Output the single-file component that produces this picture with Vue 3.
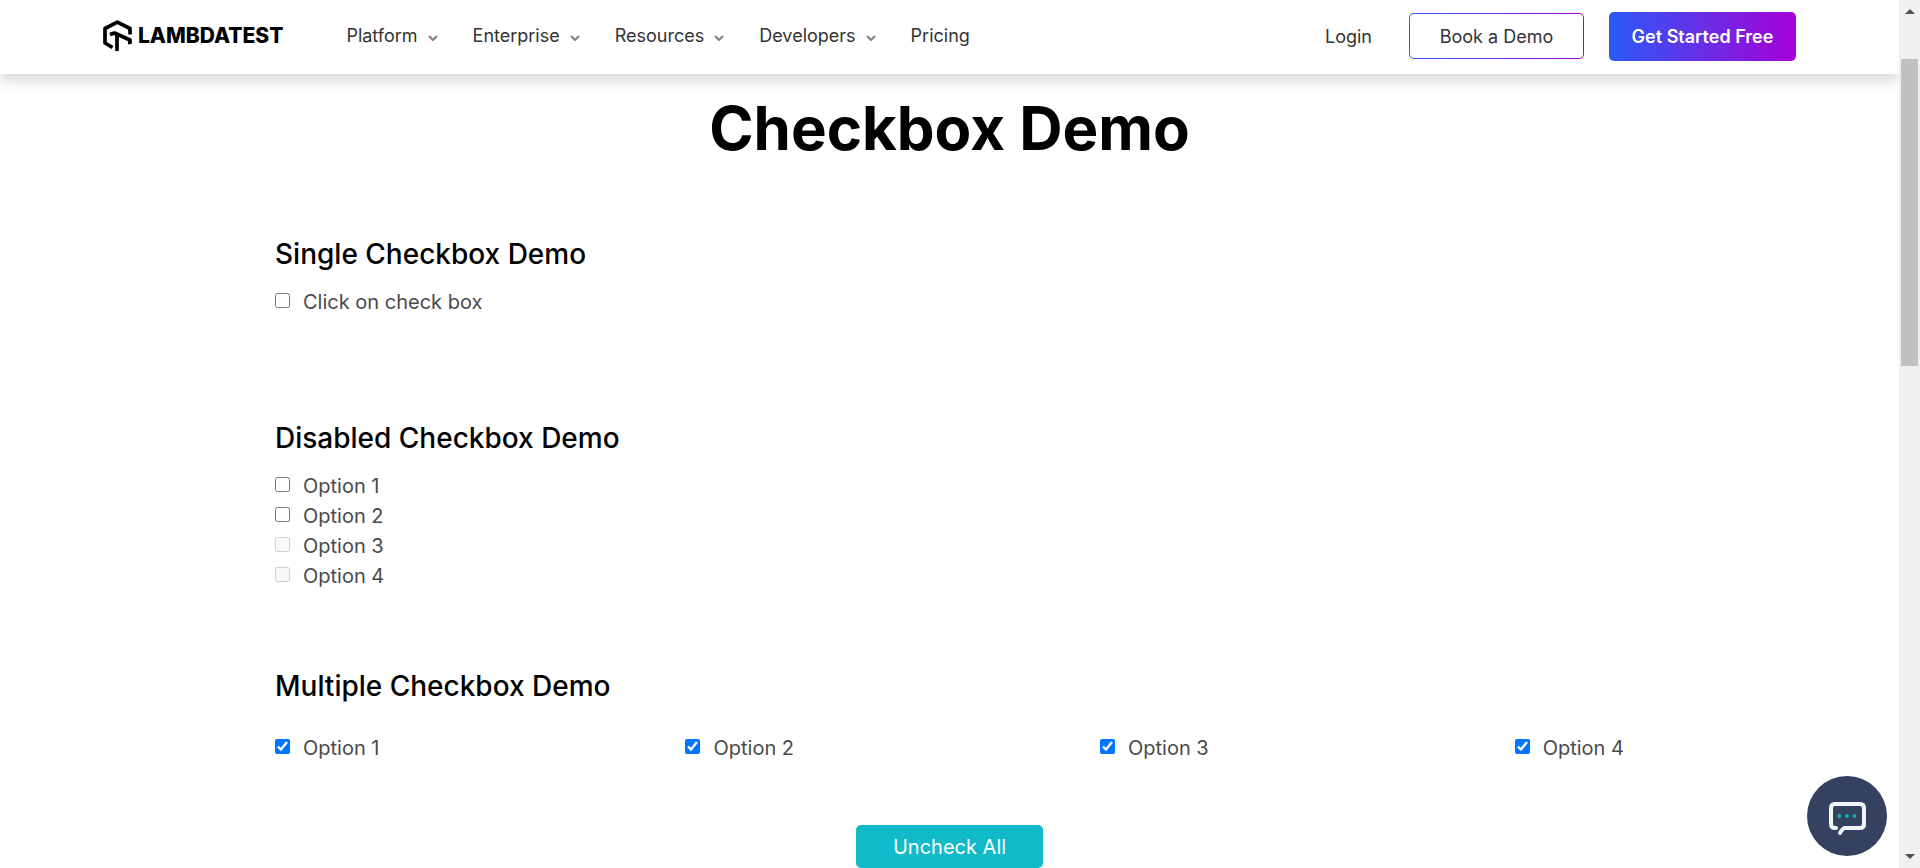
<script setup>
import { ref, computed } from 'vue'

const menus = ['Platform', 'Enterprise', 'Resources', 'Developers']

const single = ref(false)
const limited = ref([
  { label: 'Option 1', checked: false, disabled: false },
  { label: 'Option 2', checked: false, disabled: false },
  { label: 'Option 3', checked: false, disabled: true },
  { label: 'Option 4', checked: false, disabled: true },
])
const multiple = ref([
  { label: 'Option 1', checked: true },
  { label: 'Option 2', checked: true },
  { label: 'Option 3', checked: true },
  { label: 'Option 4', checked: true },
])

const allChecked = computed(() => multiple.value.every((o) => o.checked))
function toggleAll() {
  const next = !allChecked.value
  multiple.value.forEach((o) => { o.checked = next })
}
</script>

<template>
  <div class="window">
    <div class="page">
      <header class="header">
        <a class="logo" href="#">
          <svg class="logo-mark" viewBox="0 0 29 32" aria-hidden="true">
            <path d="M9.500 27.500 L2 23 V8.500 L14.300 2.200 L27 8.500 V14.500" />
            <path d="M7 14.500 L11.500 13 L27 20 V22.500 L25 22.500" />
            <path d="M14 15 V31" />
          </svg>
          <span class="logo-text">LAMBDATEST</span>
        </a>
        <nav class="nav">
          <button v-for="menu in menus" :key="menu" type="button" class="nav-item">
            {{ menu }}
            <svg class="chevron" viewBox="0 0 10 7" aria-hidden="true">
              <path d="M1 1 L5 5 L9 1" />
            </svg>
          </button>
          <a class="nav-item" href="#">Pricing</a>
        </nav>
        <div class="actions">
          <a class="login" href="#">Login</a>
          <button type="button" class="book">Book a Demo</button>
          <button type="button" class="start">Get Started Free</button>
        </div>
      </header>

      <main class="content">
        <h1>Checkbox Demo</h1>

        <section class="single">
          <h2>Single Checkbox Demo</h2>
          <label class="option">
            <input v-model="single" type="checkbox" />
            Click on check box
          </label>
        </section>

        <section class="limited">
          <h2>Disabled Checkbox Demo</h2>
          <label v-for="o in limited" :key="o.label" class="option">
            <input v-model="o.checked" type="checkbox" :disabled="o.disabled" />
            {{ o.label }}
          </label>
        </section>

        <section class="multiple">
          <h2>Multiple Checkbox Demo</h2>
          <div class="row">
            <label v-for="o in multiple" :key="o.label" class="option">
              <input v-model="o.checked" type="checkbox" />
              {{ o.label }}
            </label>
          </div>
          <button type="button" class="toggle" @click="toggleAll">
            {{ allChecked ? 'Uncheck All' : 'Check All' }}
          </button>
        </section>
      </main>

      <button type="button" class="chat" aria-label="Open chat">
        <svg viewBox="0 0 80 80" aria-hidden="true">
          <path class="bubble" d="M29 52 H28 Q24 52 24 48 V32 Q24 28 28 28 H53 Q57 28 57 32 V48 Q57 52 53 52 H38 Q36 52 33 57" />
          <circle cx="32.500" cy="40" r="2" />
          <circle cx="40" cy="40" r="2" />
          <circle cx="47.500" cy="40" r="2" />
        </svg>
      </button>
    </div>

    <div class="scrollbar" aria-hidden="true">
      <svg class="arrow" viewBox="0 0 10 5"><path d="M5 0 L10 5 H0 Z" /></svg>
      <div class="track"><div class="thumb"></div></div>
      <svg class="arrow" viewBox="0 0 10 5"><path d="M0 0 H10 L5 5 Z" /></svg>
    </div>
  </div>
</template>

<style>
body {
  margin: 0;
  background: #fff;
}
</style>

<style scoped>
.window {
  display: grid;
  grid-template-columns: minmax(0, 1fr) 21px;
  height: 100vh;
  overflow: hidden;
  font-family: Inter, "Liberation Sans", sans-serif;
  color: #333;
}
button {
  font-family: inherit;
  cursor: pointer;
}
a {
  color: inherit;
  text-decoration: none;
}
.page {
  position: relative;
  overflow: hidden;
}
.header {
  position: relative;
  display: flex;
  align-items: center;
  box-sizing: border-box;
  height: 74px;
  padding: 0 103px 2px;
  background: #fff;
  box-shadow: 0 7px 12px rgba(0, 0, 0, 0.15);
}
.logo {
  display: flex;
  align-items: center;
  gap: 6px;
  color: #000;
}
.logo-mark {
  width: 29px;
  height: 32px;
}
.logo-mark path {
  fill: none;
  stroke: #000;
  stroke-width: 3.7;
  stroke-linejoin: round;
}
.logo-text {
  font-size: 21px;
  line-height: 26px;
  font-weight: 800;
}
.nav {
  display: flex;
  align-items: center;
  gap: 35px;
  margin-left: 63px;
}
.nav-item {
  display: flex;
  align-items: center;
  gap: 10px;
  padding: 0;
  border: 0;
  background: none;
  font-size: 18px;
  line-height: 24px;
  color: #333;
}
.chevron {
  width: 10px;
  height: 7px;
  margin-top: 4px;
}
.chevron path {
  fill: none;
  stroke: #808080;
  stroke-width: 2;
}
.actions {
  display: flex;
  align-items: center;
  margin-left: auto;
  font-size: 18px;
}
.login {
  margin-right: 37px;
}
.book {
  width: 175px;
  height: 46px;
  margin-right: 25px;
  border: 1px solid transparent;
  border-radius: 5px;
  background: linear-gradient(#fff, #fff) padding-box, linear-gradient(90deg, #2c5bf5, #a301d5) border-box;
  font-size: 18px;
  color: #333;
}
.start {
  width: 187px;
  height: 49px;
  padding: 0;
  border: 0;
  border-radius: 5px;
  background: linear-gradient(90deg, #2a5af6, #a601d6);
  font-size: 18px;
  font-weight: 600;
  color: #fff;
}
.content {
  padding: 14px 275px 0;
}
h1 {
  margin: 0;
  font-size: 60px;
  line-height: 80px;
  font-weight: 700;
  text-align: center;
  color: #000;
}
h2 {
  margin: 0 0 13px;
  font-size: 28px;
  line-height: 40px;
  font-weight: 500;
  color: #000;
}
.single {
  padding-top: 66px;
}
.limited {
  padding-top: 101px;
}
.multiple {
  padding-top: 75px;
}
.option {
  display: flex;
  align-items: center;
  gap: 13px;
  font-size: 20px;
  line-height: 30px;
  font-weight: 400;
  color: #4a4a4a;
}
.option input {
  width: 15px;
  height: 15px;
  margin: 0 0 3px;
  accent-color: #0075ff;
}
.row {
  display: flex;
  justify-content: space-between;
  padding-top: 14px;
}
.toggle {
  display: block;
  width: 187px;
  height: 43px;
  margin: 62px auto 0;
  border: 0;
  border-radius: 5px;
  background: #10bac9;
  font-size: 20px;
  color: #fff;
}
.chat {
  position: absolute;
  right: 12px;
  bottom: 12px;
  width: 80px;
  height: 80px;
  padding: 0;
  border: 0;
  border-radius: 50%;
  background: #344260;
}
.chat svg {
  display: block;
}
.chat circle {
  fill: #17b1be;
}
.bubble {
  fill: none;
  stroke: #f3f4f6;
  stroke-width: 4;
  stroke-linecap: round;
  stroke-linejoin: round;
}
.scrollbar {
  display: flex;
  flex-direction: column;
  align-items: center;
  padding: 9px 0;
  background: #f0f0f0;
}
.arrow {
  width: 10px;
  height: 5px;
  fill: #505050;
}
.track {
  flex: 1;
  align-self: stretch;
  padding: 45px 2px 0;
}
.thumb {
  height: 38.6%;
  background: #c1c1c1;
}
</style>
